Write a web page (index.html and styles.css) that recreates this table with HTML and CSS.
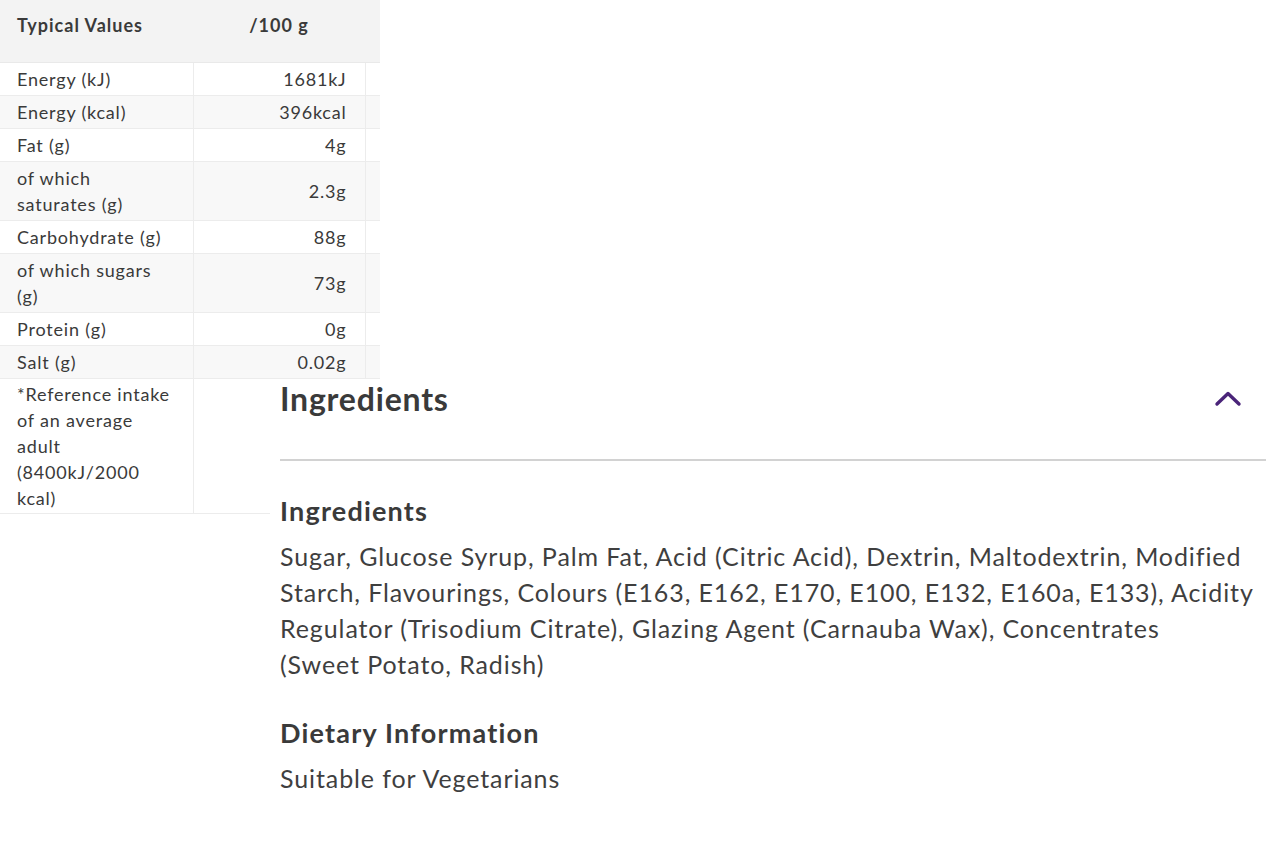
FILE: index.html
```html
<!DOCTYPE html>
<html lang="en">
<head>
<meta charset="utf-8">
<title>Nutrition &amp; Ingredients</title>
<link rel="stylesheet" href="styles.css">
</head>
<body>
<div class="page">
  <table class="nutrition">
    <thead>
      <tr class="head">
        <th class="label">Typical Values</th>
        <th class="value">/100 g</th>
        <th class="extra"></th>
      </tr>
    </thead>
    <tbody>
      <tr><td class="label">Energy (kJ)</td><td class="value">1681kJ</td><td class="extra"></td></tr>
      <tr class="alt"><td class="label">Energy (kcal)</td><td class="value">396kcal</td><td class="extra"></td></tr>
      <tr><td class="label">Fat (g)</td><td class="value">4g</td><td class="extra"></td></tr>
      <tr class="alt"><td class="label">of which<br>saturates (g)</td><td class="value">2.3g</td><td class="extra"></td></tr>
      <tr><td class="label">Carbohydrate (g)</td><td class="value">88g</td><td class="extra"></td></tr>
      <tr class="alt"><td class="label">of which sugars<br>(g)</td><td class="value">73g</td><td class="extra"></td></tr>
      <tr><td class="label">Protein (g)</td><td class="value">0g</td><td class="extra"></td></tr>
      <tr class="alt"><td class="label">Salt (g)</td><td class="value">0.02g</td><td class="extra"></td></tr>
      <tr class="note"><td class="label">*Reference intake<br>of an average<br>adult<br>(8400kJ/2000<br>kcal)</td><td class="value"></td><td class="extra"></td></tr>
    </tbody>
  </table>

  <section class="ingredients">
    <div class="panel-head">
      <h2 class="panel-title">Ingredients</h2>
      <svg class="chevron" width="28" height="18" viewBox="0 0 28 18" aria-hidden="true">
        <path d="M3 15 L14 4.5 L25 15" fill="none" stroke="#4a2479" stroke-width="3.4" stroke-linecap="round" stroke-linejoin="round"/>
      </svg>
    </div>
    <h3 class="sub">Ingredients</h3>
    <p class="body">Sugar, Glucose Syrup, Palm Fat, Acid (Citric Acid), Dextrin, Maltodextrin, Modified Starch, Flavourings, Colours (E163, E162, E170, E100, E132, E160a, E133), Acidity Regulator (Trisodium Citrate), Glazing Agent (Carnauba Wax), Concentrates (Sweet&nbsp;Potato, Radish)</p>
    <h3 class="sub sub-2">Dietary Information</h3>
    <p class="body">Suitable for Vegetarians</p>
  </section>
</div>
</body>
</html>
```

FILE: styles.css
```css
* { box-sizing: border-box; }

html, body {
  margin: 0;
  padding: 0;
  background: #ffffff;
}

body {
  font-family: Lato, "Noto Sans", "Liberation Sans", sans-serif;
  color: #3a3a3a;
  width: 1280px;
  height: 853px;
  overflow: hidden;
}

.page {
  display: flex;
  flex-direction: column;
}

/* ---------- nutrition table ---------- */
.nutrition {
  width: 380px;
  border-collapse: collapse;
  font-size: 18px;
  line-height: 26px;
  letter-spacing: 0.8px;
  color: #3a3a3a;
}

.nutrition .head th {
  background: #f3f3f3;
  font-weight: 700;
  letter-spacing: 1px;
  height: 60px;
  padding: 12px 0 24px;
  vertical-align: middle;
  border-bottom: 1px solid #e9e9e9;
}

.nutrition .head th.label {
  text-align: left;
  padding-left: 17px;
}

.nutrition .head th.value {
  text-align: center;
}

.nutrition td {
  padding-top: 3px;
  padding-bottom: 3px;
  border-bottom: 1px solid #ececec;
  vertical-align: middle;
}

.nutrition tr.note td {
  padding-top: 2px;
  padding-bottom: 2px;
}

.nutrition td.label {
  width: 193px;
  padding-left: 17px;
  border-right: 1px solid #ececec;
}

.nutrition td.value {
  width: 172px;
  text-align: right;
  padding-right: 18px;
  border-right: 1px solid #ececec;
}

.nutrition td.extra,
.nutrition th.extra {
  width: 15px;
}

.nutrition tr.alt td {
  background: #f8f8f8;
}

/* ---------- ingredients panel ---------- */
.ingredients {
  position: relative;
  margin-top: -135px;
  margin-left: 270px;
  padding: 0 14px 0 10px;
  background: #ffffff;
}

.panel-head {
  display: flex;
  align-items: flex-start;
  justify-content: space-between;
  padding: 0 0 40px;
  border-bottom: 2px solid #d2d2d2;
}

.panel-title {
  margin: 0;
  font-size: 32px;
  line-height: 40px;
  letter-spacing: 0.8px;
  font-weight: 700;
  color: #3a3a3a;
}

.chevron {
  margin: 10px 24px 0 0;
  display: block;
}

.sub {
  margin: 33px 0 0;
  font-size: 27px;
  line-height: 34px;
  letter-spacing: 1.2px;
  font-weight: 700;
  color: #3a3a3a;
}

.sub-2 {
  margin-top: 34px;
}

.body {
  margin: 10px 0 0;
  font-size: 25px;
  line-height: 36px;
  letter-spacing: 0.9px;
  color: #3f3f3f;
}
```
